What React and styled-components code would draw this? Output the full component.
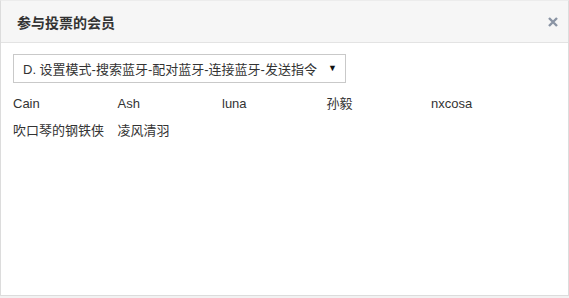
import React from "react";
import styled, { createGlobalStyle } from "styled-components";

const Global = createGlobalStyle`
  html, body { margin: 0; padding: 0; background: #f2f2f2; }
  body { font-family: "Liberation Sans", Arial, "Noto Sans CJK SC", sans-serif; }
  * { box-sizing: border-box; }
`;

const Dialog = styled.div`
  width: 569px;
  height: 296px;
  background: #fff;
  border: 1px solid #dcdcdc;
  border-top-color: #ececec;
  display: flex;
  flex-direction: column;
`;

const Header = styled.div`
  height: 42px;
  flex: none;
  background: #f6f6f6;
  border-bottom: 1px solid #e3e3e3;
  display: flex;
  align-items: center;
  justify-content: space-between;
  padding: 0 7px 0 16px;
`;

const Title = styled.div`
  font-family: "Noto Sans CJK SC", sans-serif;
  font-size: 14px;
  font-weight: 700;
  color: #333;
  line-height: 20px;
`;

const Close = styled.button`
  border: 0;
  background: transparent;
  padding: 0;
  width: 16px;
  height: 16px;
  display: flex;
  align-items: center;
  justify-content: center;
  cursor: pointer;
`;

const Body = styled.div`
  padding: 11px 12px;
  display: flex;
  flex-direction: column;
`;

const Select = styled.div`
  width: 333px;
  height: 29px;
  border: 1px solid #c9c9c9;
  display: flex;
  align-items: center;
  justify-content: space-between;
  padding: 0 8px 0 9px;
  font-size: 13px;
  color: #333;
`;

const Arrow = styled.span`
  font-size: 9px;
  color: #111;
  line-height: 1;
`;

const Members = styled.div`
  margin-top: 7px;
  display: grid;
  grid-template-columns: repeat(5, 104.5px);
  grid-auto-rows: 27px;
  font-size: 13px;
  color: #333;
`;

const Member = styled.div`
  line-height: 27px;
  white-space: nowrap;
`;

const members = ["Cain", "Ash", "luna", "孙毅", "nxcosa", "吹口琴的钢铁侠", "凌风清羽"];

export default function App() {
  return (
    <>
      <Global />
      <Dialog>
        <Header>
          <Title>参与投票的会员</Title>
          <Close aria-label="close">
            <svg width="10" height="10" viewBox="0 0 10 10">
              <path d="M1 1 L9 9 M9 1 L1 9" stroke="#8a94a4" strokeWidth="2.4" strokeLinecap="butt" />
            </svg>
          </Close>
        </Header>
        <Body>
          <Select>
            <span>D. 设置模式-搜索蓝牙-配对蓝牙-连接蓝牙-发送指令</span>
            <Arrow>▼</Arrow>
          </Select>
          <Members>
            {members.map((m) => (
              <Member key={m}>{m}</Member>
            ))}
          </Members>
        </Body>
      </Dialog>
    </>
  );
}
